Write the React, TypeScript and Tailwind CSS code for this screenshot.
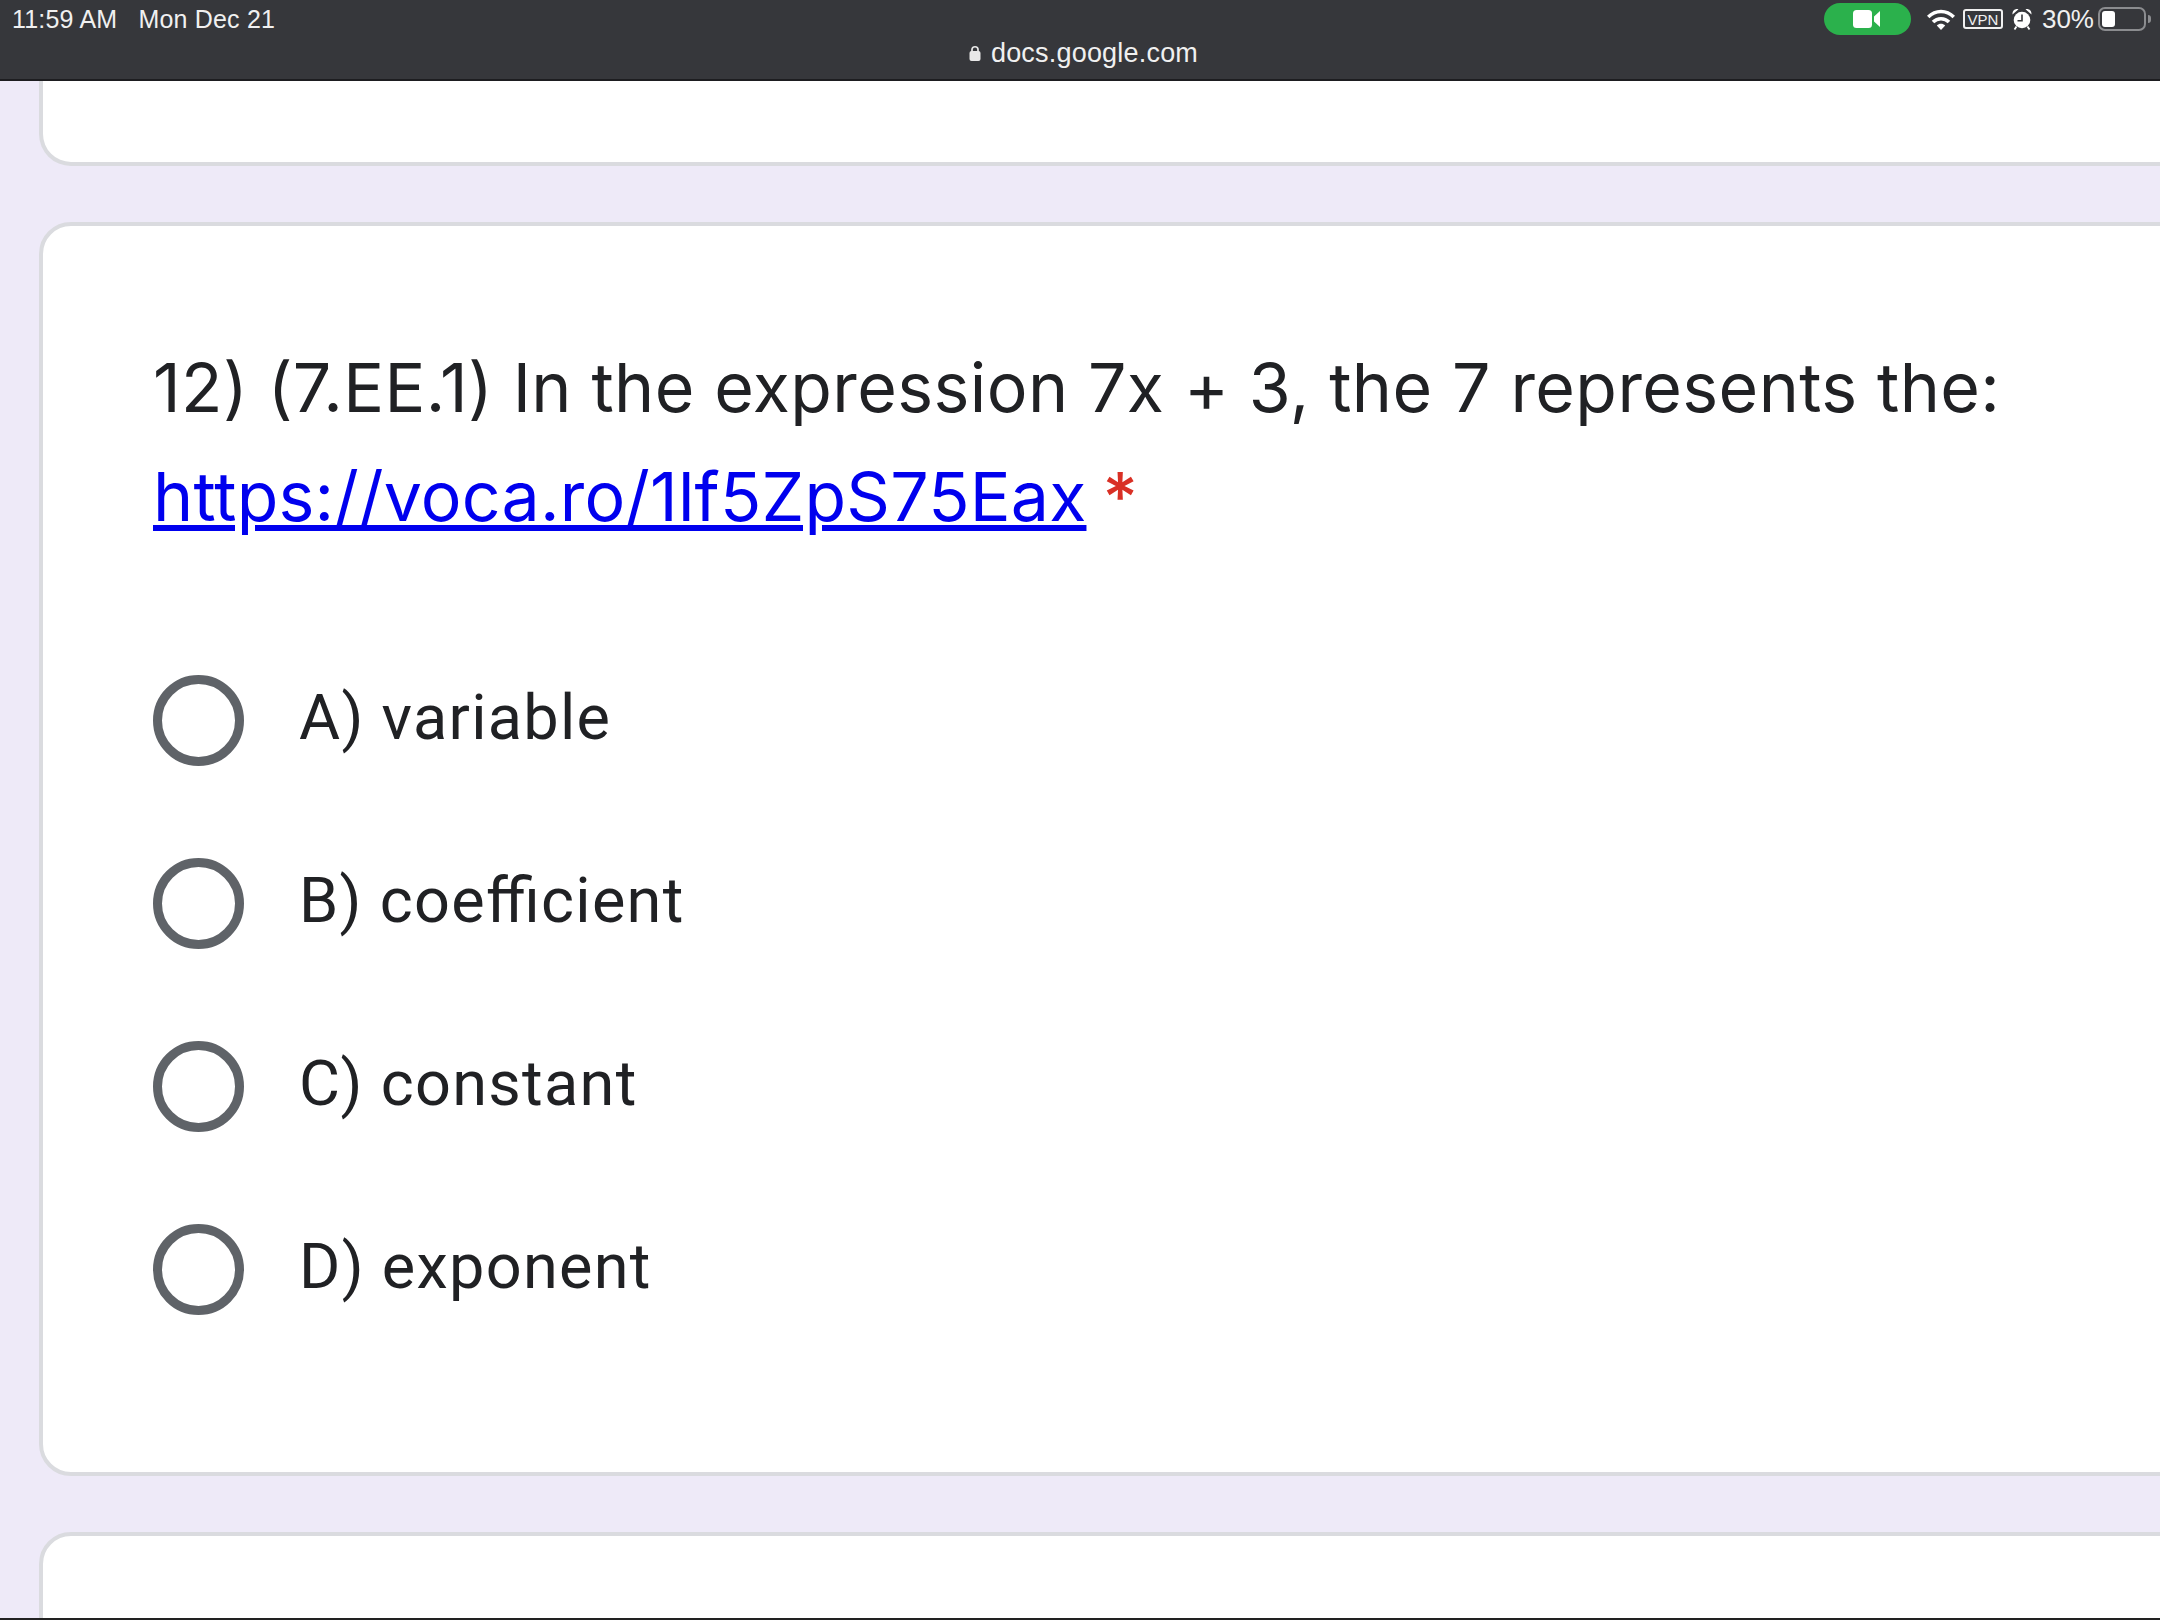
import React from 'react';

const OPTIONS = ['A) variable', 'B) coefficient', 'C) constant', 'D) exponent'];

function WifiIcon() {
  return (
    <svg width="28" height="21" viewBox="0 0 28 21" className="ml-[16px]">
      <path d="M1.200 8C8.500 .6 19.500 .6 26.800 8" fill="none" stroke="#fff" strokeWidth="3.600" />
      <path d="M6 13C10.500 8.600 17.500 8.600 22 13" fill="none" stroke="#fff" strokeWidth="3.600" />
      <path d="M9.800 16.500C12.200 14.300 15.800 14.300 18.200 16.500L14 21Z" fill="#fff" />
    </svg>
  );
}

function AlarmIcon() {
  return (
    <svg width="20" height="22" viewBox="0 0 20 22" className="ml-[9px]">
      <circle cx="10" cy="12" r="8.300" fill="#fff" />
      <path d="M10 6.500V12.800H5.500" fill="none" stroke="#36373b" strokeWidth="1.600" />
      <path d="M.5 6.500C.2 2.800 2.800 .5 6.500 1.200ZM19.500 6.500C19.800 2.800 17.200 .5 13.500 1.200Z" fill="#fff" />
      <path d="M4.500 18.500L2.500 21.500M15.500 18.500L17.500 21.500" stroke="#fff" strokeWidth="1.800" />
    </svg>
  );
}

function LockIcon() {
  return (
    <svg width="12" height="16" viewBox="0 0 12 16" className="mr-[10px]">
      <path d="M3 7V4.500C3 .8 9 .8 9 4.500V7" fill="none" stroke="#e8e8e8" strokeWidth="1.700" />
      <rect x="0.500" y="6" width="11" height="10" rx="2" fill="#e8e8e8" />
    </svg>
  );
}

function StatusBar() {
  return (
    <div className="h-[81px] shrink-0 bg-[#36373b] border-b-2 border-[#1d1d20] text-[#f0f0f0] font-['Liberation_Sans',sans-serif]">
      <div className="flex items-center justify-between h-[38px] pl-[12px] pr-[9px]">
        <div className="flex text-[25px] leading-none tracking-[0.2px] gap-[21px]">
          <span>11:59 AM</span>
          <span>Mon Dec 21</span>
        </div>
        <div className="flex items-center">
          <div className="flex items-center justify-center w-[87px] h-[32px] rounded-full bg-[#2bb14c]">
            <svg width="28" height="20" viewBox="0 0 28 20">
              <rect x="0" y="1" width="19" height="18" rx="3.500" fill="#fff" />
              <path d="M21 7.500L27 2V18L21 12.500Z" fill="#fff" />
            </svg>
          </div>
          <WifiIcon />
          <div className="ml-[8px] flex items-center justify-center w-[40px] h-[20px] rounded-[3px] border-2 border-[#f0f0f0] text-[15px] leading-none">VPN</div>
          <AlarmIcon />
          <span className="ml-[10px] text-[26px] leading-none">30%</span>
          <div className="ml-[4px] flex items-center">
            <div className="w-[48px] h-[24px] rounded-[7px] border-2 border-[#8b8c8f] p-[2px]">
              <div className="w-[13px] h-full rounded-[3px] bg-white" />
            </div>
            <div className="ml-[2px] w-[3px] h-[8px] rounded-r-full bg-[#8b8c8f]" />
          </div>
        </div>
      </div>
      <div className="flex items-center justify-center h-[30px] pl-[7px] text-[27px] leading-none tracking-[0.2px]">
        <LockIcon />
        <span>docs.google.com</span>
      </div>
    </div>
  );
}

function RadioOption({ label }: { label: string }) {
  return (
    <div className="flex items-center h-[183px]">
      <div className="w-[91px] h-[91px] shrink-0 rounded-full border-[9px] border-[#5f6368]" />
      <span className="ml-[55px] -mt-[6px] text-[63px] leading-none tracking-[1.3px] [font-feature-settings:'liga'_1] text-[#202124]">{label}</span>
    </div>
  );
}

export default function App() {
  return (
    <div className="h-[1620px] w-[2160px] overflow-hidden flex flex-col bg-[#eeeaf8] border-b-2 border-[#222] font-['Roboto',sans-serif]">
      <StatusBar />

      {/* previous question, cut off by the bar */}
      <div className="h-[85px] shrink-0 ml-[39px] -mr-[40px] bg-white border-4 border-t-0 border-[#dadbdf] rounded-b-[32px]" />

      <div className="h-[1254px] shrink-0 mt-[56px] ml-[39px] -mr-[40px] bg-white border-4 border-[#dadbdf] rounded-[32px] pl-[110px] pt-[107px]">
        <div className="text-[68px] leading-[109px] tracking-[0.4px] text-[#202124] font-['Inter',sans-serif] whitespace-nowrap">
          <div>12) (7.EE.1) In the expression 7x + 3, the 7 represents the:</div>
          <div>
            <a href="#" className="text-[#0000ee] underline tracking-[0.2px]">https://voca.ro/1lf5ZpS75Eax</a>
            <span className="ml-[16px] font-medium text-[#d93025]">*</span>
          </div>
        </div>
        <div className="mt-[78px]">
          {OPTIONS.map((o) => (
            <RadioOption key={o} label={o} />
          ))}
        </div>
      </div>

      <div className="h-[200px] shrink-0 mt-[56px] ml-[39px] -mr-[40px] bg-white border-4 border-[#dadbdf] rounded-[32px]" />
    </div>
  );
}
